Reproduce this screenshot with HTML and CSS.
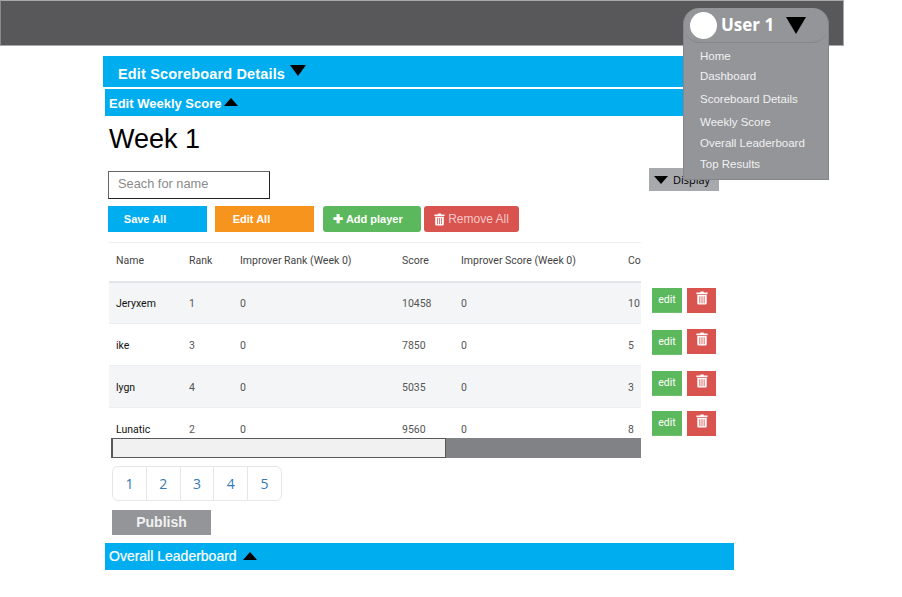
FILE: index.html
```html
<!DOCTYPE html>
<html lang="en">
  <head>
    <meta charset="UTF-8" />
    <title>Edit Scoreboard</title>
    <link rel="stylesheet" href="styles.css">
  </head>
  <body>
    <svg class="sprite" width="0" height="0">
      <symbol id="trash" viewBox="0 0 14 16">
        <path d="M5 1.500V.5h4v1h4.500v2H.5v-2zM1.500 4.500h11V14a1.500 1.500 0 0 1-1.500 1.500H3A1.500 1.500 0 0 1 1.500 14zM4 6v8h1V6zm2.500 0v8h1V6zM9 6v8h1V6z" fill="currentColor" fill-rule="evenodd" />
      </symbol>
    </svg>

    <header class="top-bar">
      <div class="user-menu">
        <div class="user-head">
          <span class="avatar"></span>
          <span class="user-name">User 1</span>
          <span class="tri tri-down tri-user"></span>
        </div>
        <ul class="user-links">
          <li class="first">Home</li>
          <li>Dashboard</li>
          <li class="gap">Scoreboard Details</li>
          <li class="gap">Weekly Score</li>
          <li>Overall Leaderboard</li>
          <li>Top Results</li>
        </ul>
      </div>
    </header>

    <main class="content">
      <div class="bar bar-main">Edit Scoreboard Details <span class="tri tri-down"></span></div>
      <div class="bar bar-sub">Edit Weekly Score<span class="tri tri-up"></span></div>

      <div class="week-row">
        <h1>Week 1</h1>
        <button class="display-btn"><span class="tri tri-down"></span>Display</button>
      </div>

      <input class="search" type="text" placeholder="Seach for name" />

      <div class="toolbar">
        <button class="btn btn-save">Save All</button>
        <button class="btn btn-edit">Edit All</button>
        <button class="btn btn-add"><span class="plus">✚</span> Add player</button>
        <button class="btn btn-remove"><svg class="icon"><use href="#trash" /></svg> Remove All</button>
      </div>

      <div class="table-row">
        <div class="table-col">
          <div class="table-wrap">
            <table>
              <thead>
                <tr>
                  <th class="c1">Name</th>
                  <th class="c2">Rank</th>
                  <th class="c3">Improver Rank (Week 0)</th>
                  <th class="c4">Score</th>
                  <th class="c5">Improver Score (Week 0)</th>
                  <th class="c6">Correct</th>
                </tr>
              </thead>
              <tbody>
                <tr><td class="name">Jeryxem</td><td>1</td><td>0</td><td>10458</td><td>0</td><td>10</td></tr>
                <tr><td class="name">ike</td><td>3</td><td>0</td><td>7850</td><td>0</td><td>5</td></tr>
                <tr><td class="name">lygn</td><td>4</td><td>0</td><td>5035</td><td>0</td><td>3</td></tr>
                <tr><td class="name">Lunatic</td><td>2</td><td>0</td><td>9560</td><td>0</td><td>8</td></tr>
              </tbody>
            </table>
          </div>
          <div class="scroll-track"><div class="scroll-thumb"></div></div>
        </div>

        <div class="actions">
          <div class="action"><button class="mini mini-edit">edit</button><button class="mini mini-del"><svg class="icon"><use href="#trash" /></svg></button></div>
          <div class="action"><button class="mini mini-edit">edit</button><button class="mini mini-del"><svg class="icon"><use href="#trash" /></svg></button></div>
          <div class="action"><button class="mini mini-edit">edit</button><button class="mini mini-del"><svg class="icon"><use href="#trash" /></svg></button></div>
          <div class="action"><button class="mini mini-edit">edit</button><button class="mini mini-del"><svg class="icon"><use href="#trash" /></svg></button></div>
        </div>
      </div>

      <ul class="pager">
        <li>1</li>
        <li>2</li>
        <li>3</li>
        <li>4</li>
        <li>5</li>
      </ul>

      <button class="publish">Publish</button>

      <div class="bar bar-sub bar-last">Overall Leaderboard <span class="tri tri-up"></span></div>
    </main>
  </body>
</html>
```

FILE: styles.css
```css
* {
  box-sizing: border-box;
}

body {
  margin: 0;
  background: #fff;
  font-family: "Liberation Sans", Arial, sans-serif;
  color: #000;
}

.sprite {
  position: absolute;
}

button {
  font-family: inherit;
  border: none;
  padding: 0;
}

/* top bar */
.top-bar {
  position: relative;
  width: 844px;
  height: 46px;
  background: #58585a;
  border: 1px solid #a9a9ab;
  border-left-color: #8a8a8c;
}

.user-menu {
  position: absolute;
  top: 7px;
  left: 682px;
  width: 146px;
  height: 172px;
  background: #939598;
  border: 1px solid #858689;
  border-top: none;
  border-radius: 16px 16px 0 0;
  z-index: 5;
}

.user-head {
  display: flex;
  align-items: center;
  height: 35px;
  padding-left: 6px;
  border-bottom: 1px solid #858689;
  border-radius: 0 0 16px 16px;
}

.avatar {
  width: 27px;
  height: 27px;
  border-radius: 50%;
  background: #fff;
}

.user-name {
  margin: -2px 0 0 4px;
  font-family: "Open Sans", sans-serif;
  font-weight: 700;
  font-size: 17px;
  color: #fff;
}

.user-links {
  list-style: none;
  margin: 0;
  padding: 6px 0 0 16px;
  font-size: 11.500px;
  color: #f1f1f2;
}

.user-links li {
  height: 21px;
  line-height: 15px;
}

.user-links li.first {
  height: 20px;
}

.user-links li.gap {
  height: 23px;
  padding-top: 2px;
}

.tri {
  display: inline-block;
  width: 0;
  height: 0;
  border-left: 8px solid transparent;
  border-right: 8px solid transparent;
}

.tri-down {
  border-top: 10px solid #000;
}

.tri-up {
  border-bottom: 8px solid #000;
  border-left-width: 7px;
  border-right-width: 7px;
}

.tri-user {
  margin-left: 12px;
  border-left-width: 10px;
  border-right-width: 10px;
  border-top-width: 17px;
}

/* content */
.content {
  width: 631px;
  margin: 10px 0 0 103px;
}

.bar {
  background: #00aeef;
  color: #fff;
  font-weight: bold;
}

.bar-main {
  height: 31px;
  line-height: 36px;
  padding-left: 15px;
  font-size: 14.500px;
  letter-spacing: 0.150px;
}

.bar-main .tri {
  vertical-align: 3px;
  margin-left: 1px;
  border-top-width: 11px;
}

.bar-sub {
  height: 27px;
  line-height: 30px;
  margin: 2px 0 0 2px;
  padding-left: 4px;
  font-size: 13px;
}

.bar-sub .tri {
  vertical-align: 2px;
  margin-left: 3px;
}

.week-row {
  position: relative;
  height: 55px;
  padding-left: 6px;
}

h1 {
  margin: 0;
  padding-top: 7px;
  font-size: 27px;
  line-height: 32px;
  font-weight: normal;
}

.display-btn {
  position: absolute;
  left: 546px;
  top: 52px;
  display: flex;
  align-items: center;
  width: 70px;
  height: 23px;
  padding-left: 5px;
  background: #a7a9ac;
  font-family: "Open Sans", sans-serif;
  font-size: 11px;
  color: #000;
}

.display-btn .tri {
  margin-right: 5px;
  border-left-width: 7px;
  border-right-width: 7px;
  border-top-width: 8px;
}

.search {
  display: block;
  width: 162px;
  height: 28px;
  margin-left: 5px;
  padding: 0 9px 3px;
  border: 1px solid #222;
  border-left-color: #666;
  border-top-color: #666;
  font-family: inherit;
  font-size: 12.800px;
  outline: none;
}

.search::placeholder {
  color: #8a8a8a;
}

.toolbar {
  display: flex;
  align-items: flex-start;
  margin: 7px 0 0 5px;
}

.btn {
  height: 26px;
  color: #fff;
  font-size: 11px;
  font-weight: bold;
}

.btn-save {
  width: 99px;
  padding: 0 25px 1px 0;
  background: #00aeef;
}

.btn-edit {
  width: 99px;
  margin-left: 8px;
  padding: 0 26px 1px 0;
  background: #f7941e;
}

.btn-add {
  width: 98px;
  margin-left: 9px;
  padding: 0 8px 1px 0;
  background: #5cb85c;
  border-radius: 3px;
}

.plus {
  font-size: 12px;
}

.btn-remove {
  display: flex;
  align-items: center;
  justify-content: center;
  gap: 3px;
  width: 95px;
  margin-left: 3px;
  background: #d9534f;
  border-radius: 3px;
  font-weight: normal;
  font-size: 12px;
  color: #f6c9c7;
}

.icon {
  width: 11px;
  height: 13px;
  color: #fff;
}

/* table */
.table-row {
  display: flex;
  margin-top: 10px;
  margin-left: 6px;
}

.table-col {
  width: 532px;
}

.table-wrap {
  height: 196px;
  overflow: hidden;
}

table {
  width: 700px;
  border-collapse: collapse;
  table-layout: fixed;
  font-family: Roboto, sans-serif;
  font-size: 10.500px;
  color: #555;
}

thead tr {
  height: 39px;
  border-top: 1px solid #eceeef;
  border-bottom: 2px solid #e2e4e8;
}

th {
  padding: 0 0 3px 7px;
  font-weight: normal;
  text-align: left;
  color: #444;
}

td {
  padding: 2px 0 0 7px;
}

tbody tr {
  height: 42px;
  border-bottom: 1px solid #eceeef;
}

tbody tr:nth-child(odd) {
  background: #f4f5f7;
}

tbody tr:last-child {
  background: #fff;
}

.name {
  color: #111;
}

.c1 { width: 73px; }
.c2 { width: 51px; }
.c3 { width: 162px; }
.c4 { width: 59px; }
.c5 { width: 167px; }
.c6 { width: 188px; }

.scroll-track {
  height: 20px;
  padding-left: 2px;
  background: linear-gradient(to right, #fff 2px, #808285 2px);
}

.scroll-thumb {
  width: 335px;
  height: 20px;
  background: #f1f1f2;
  border: 1px solid #58595b;
  border-left-width: 2px;
}

.actions {
  margin-left: 11px;
  padding-top: 46px;
}

.action {
  display: flex;
  gap: 5px;
  height: 42px;
}

.action:nth-child(2) {
  height: 41px;
}

.action:nth-child(3) {
  height: 40px;
}

.action:nth-child(2) .mini-del {
  margin-top: -1px;
}

.mini {
  height: 25px;
  color: #fff;
}

.mini-edit {
  width: 30px;
  padding-bottom: 2px;
  background: #5cb85c;
  font-family: Roboto, sans-serif;
  font-size: 10.500px;
  border-bottom: 1px solid #6fbf6f;
}

.mini-del {
  width: 29px;
  background: #d9534f;
  padding-bottom: 3px;
}

.mini-del .icon {
  width: 12px;
  height: 14px;
}

/* pager */
.pager {
  display: flex;
  list-style: none;
  width: 170px;
  height: 35px;
  margin: 8px 0 0 9px;
  padding: 0;
  border: 1px solid #e6e7e8;
  border-radius: 6px;
  font-family: "Open Sans", sans-serif;
  font-size: 14px;
  color: #337ab7;
}

.pager li {
  width: 34px;
  line-height: 33px;
  text-align: center;
  border-left: 1px solid #e6e7e8;
}

.pager li:first-child {
  width: 33px;
  border-left: none;
}

.publish {
  display: block;
  width: 99px;
  height: 25px;
  margin: 9px 0 0 9px;
  padding-bottom: 2px;
  background: #939598;
  color: #f1f1f2;
  font-size: 14px;
  font-weight: bold;
}

.bar-last {
  height: 27px;
  line-height: 27px;
  margin-top: 8px;
  font-weight: normal;
  font-size: 14px;
  -webkit-text-stroke: 0.200px #fff;
}

.bar-last .tri {
  margin-left: 2px;
  vertical-align: 1px;
}
```
